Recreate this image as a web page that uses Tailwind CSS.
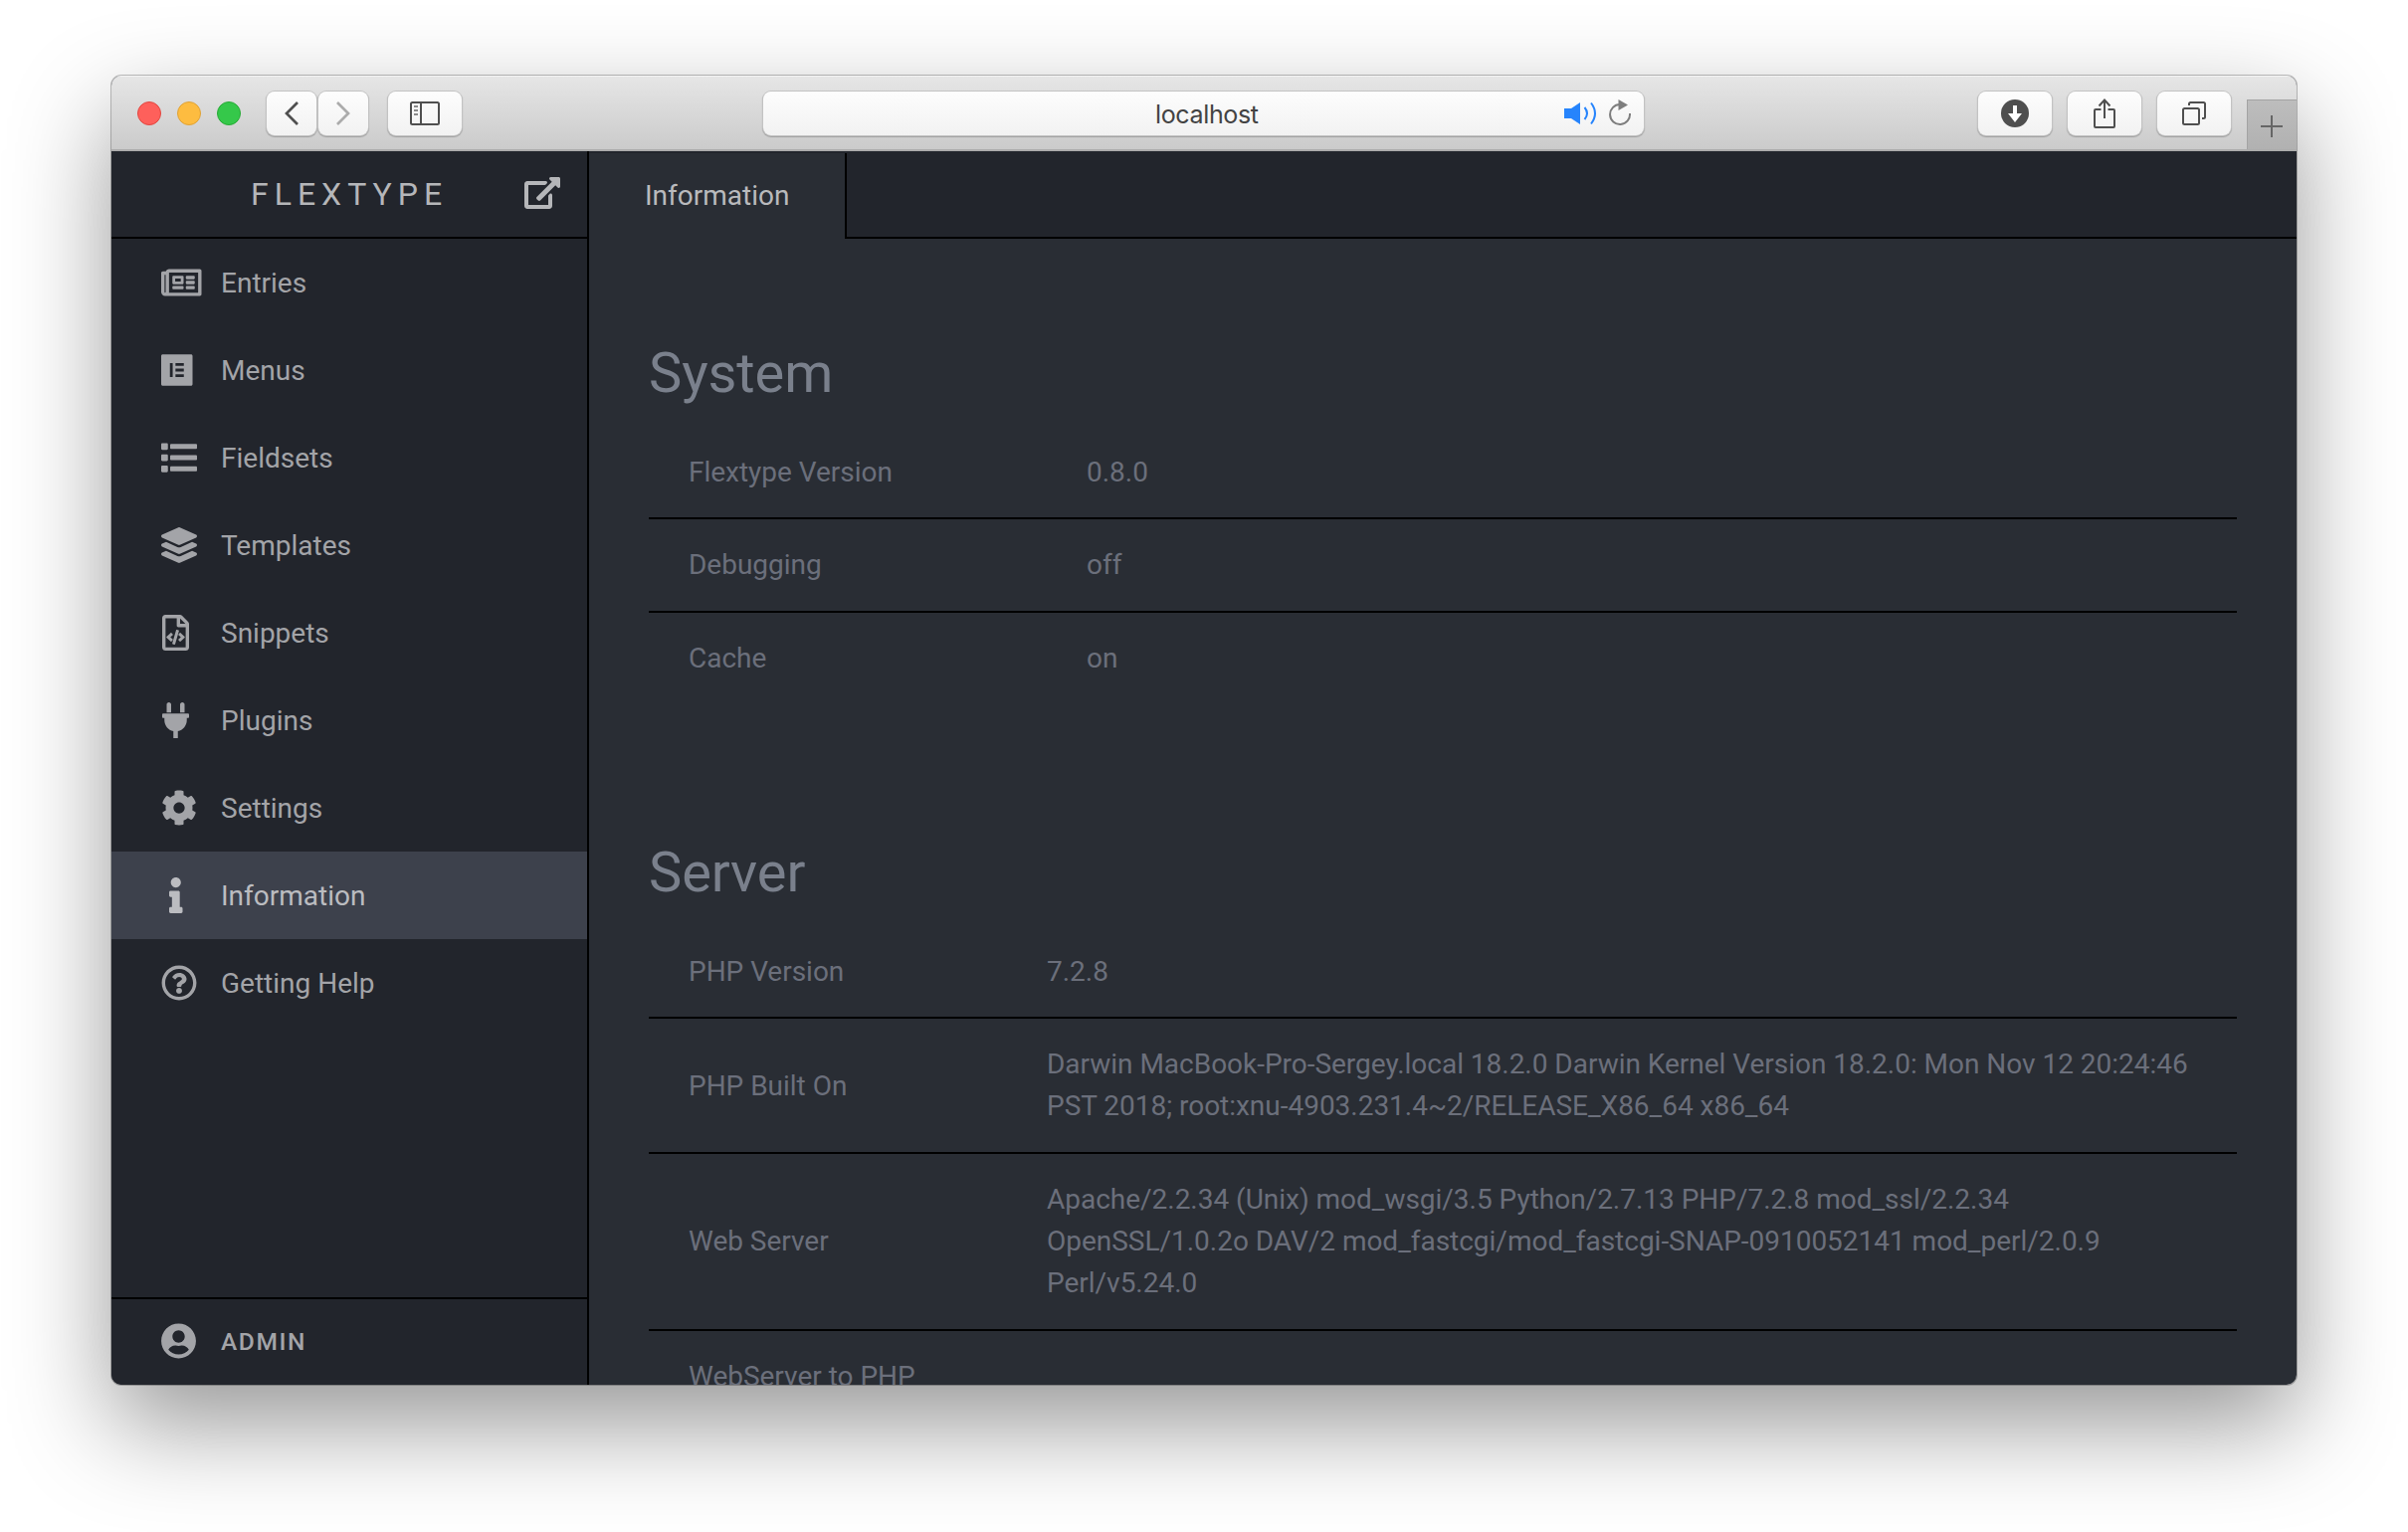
<!DOCTYPE html>
<html lang="en">
<head>
<meta charset="utf-8">
<title>Flextype</title>
<script src="https://cdn.jsdelivr.net/npm/@tailwindcss/browser@4"></script>
</head>
<body class="bg-white font-['Roboto',sans-serif] w-[2420px] h-[1540px] overflow-hidden px-28 pt-[76px]">
<div class="w-[2196px] h-[1316px] rounded-[10px] shadow-[0_0_0_1px_rgba(0,0,0,0.25),0_40px_100px_0px_rgba(0,0,0,0.41)]">
<div class="w-full h-full rounded-[10px] overflow-hidden flex flex-col bg-[#292d34]">
  <!-- Browser toolbar -->
  <header class="h-[76px] shrink-0 flex items-center pt-0.5 bg-linear-to-b from-[#e6e6e6] to-[#cbcbcb] border-b-2 border-[#acacac] shadow-[inset_0_1px_0_#f4f4f4]">
    <div class="flex gap-4 ml-[26px]">
      <span class="size-6 rounded-full bg-[#fe605b] border border-[#e2463f]"></span>
      <span class="size-6 rounded-full bg-[#fdbc40] border border-[#dfa236]"></span>
      <span class="size-6 rounded-full bg-[#35c84a] border border-[#27aa35]"></span>
    </div>
    <div class="flex gap-0.5 ml-[26px]">
      <span class="w-[50px] h-11 rounded-lg bg-linear-to-b from-[#fdfdfd] to-[#f2f2f2] shadow-[0_0_0_1px_#c3c3c3,0_1px_1px_1px_#9f9f9f] flex items-center justify-center">
        <svg class="w-7 h-7" viewBox="0 0 28 28" fill="none" stroke="#4f4f4f" stroke-width="2.7"><path d="M20 3 9 14l11 11"/></svg>
      </span>
      <span class="w-[50px] h-11 rounded-lg bg-linear-to-b from-[#fdfdfd] to-[#f2f2f2] shadow-[0_0_0_1px_#c3c3c3,0_1px_1px_1px_#9f9f9f] flex items-center justify-center">
        <svg class="w-7 h-7" viewBox="0 0 28 28" fill="none" stroke="#ababab" stroke-width="2.7"><path d="M8 3l11 11L8 25"/></svg>
      </span>
    </div>
    <span class="ml-5 w-[74px] h-11 rounded-lg bg-linear-to-b from-[#fdfdfd] to-[#f2f2f2] shadow-[0_0_0_1px_#c3c3c3,0_1px_1px_1px_#9f9f9f] flex items-center justify-center">
      <svg class="w-[30px] h-6" viewBox="0 0 30 24" fill="none" stroke="#4f4f4f" stroke-width="2"><rect x="1" y="1" width="28" height="22" rx="1.5"/><path d="M11 1v22"/><path stroke="#8a8a8a" d="M4 5h4M4 9h4M4 13h4"/></svg>
    </span>
    <div class="ml-[303px] w-[885px] h-11 rounded-lg bg-linear-to-b from-[#fdfdfd] to-[#f2f2f2] shadow-[0_0_0_1px_#c3c3c3,0_1px_1px_1px_#9f9f9f] flex items-center pl-[394px]">
      <span class="text-[25px] leading-none text-[#434343] font-['Inter',sans-serif] tracking-[-0.35px] mt-0.5 w-[411px]">localhost</span>
      <svg class="w-[34px] h-6 shrink-0" viewBox="0 0 34 24" fill="none" stroke="#2684fc" stroke-width="2"><path fill="#2684fc" stroke="none" d="M0 7h7l9-6v22l-9-6H0z"/><path d="M20.500 6q5 6 0 12M27 1.500q8 10.500 0 21"/></svg>
      <svg class="w-6 h-7 ml-[11px] shrink-0" viewBox="0 0 24 28" fill="none" stroke="#7e7e7e" stroke-width="2"><path d="M11 5A10 10 0 1 0 21 14"/><path fill="#7e7e7e" stroke="none" d="M9.500 0 19 5.500 9.500 11z"/></svg>
    </div>
    <div class="flex gap-4 ml-[336px]">
      <span class="w-[74px] h-11 rounded-lg bg-linear-to-b from-[#fdfdfd] to-[#f2f2f2] shadow-[0_0_0_1px_#c3c3c3,0_1px_1px_1px_#9f9f9f] flex items-center justify-center">
        <svg class="size-7" viewBox="0 0 28 28"><circle cx="14" cy="14" r="14" fill="#4f4f4f"/><path fill="#fff" d="M12 6h4v8h5l-7 9-7-9h5z"/></svg>
      </span>
      <span class="w-[74px] h-11 rounded-lg bg-linear-to-b from-[#fdfdfd] to-[#f2f2f2] shadow-[0_0_0_1px_#c3c3c3,0_1px_1px_1px_#9f9f9f] flex items-center justify-center">
        <svg class="w-6 h-[30px]" viewBox="0 0 24 30" fill="none" stroke="#4f4f4f" stroke-width="2"><path d="M8.500 11H3q-1 0-1 1v16q0 1 1 1h18q1 0 1-1V12q0-1-1-1h-5.500M12 20V1.500M6.500 7.500 12 1.500l5.500 6"/></svg>
      </span>
      <span class="w-[74px] h-11 rounded-lg bg-linear-to-b from-[#fdfdfd] to-[#f2f2f2] shadow-[0_0_0_1px_#c3c3c3,0_1px_1px_1px_#9f9f9f] flex items-center justify-center">
        <svg class="w-6 h-6" viewBox="0 0 24 24" fill="none" stroke="#4f4f4f" stroke-width="2"><rect x="1" y="7" width="16" height="16" rx="1.500"/><path d="M7 4V2.500Q7 1 8.500 1h13Q23 1 23 2.500v13q0 1.500-1.500 1.500H20"/></svg>
      </span>
    </div>
    <span class="ml-auto self-end w-[50px] h-[50px] bg-linear-to-b from-[#bdbdbd] to-[#b1b1b1] border-l border-t border-[#a3a3a3] flex items-center justify-center">
      <svg class="size-[22px] mt-0.5 mr-0.5" viewBox="0 0 22 22" stroke="#666" stroke-width="2"><path d="M11 0v22M0 11h22"/></svg>
    </span>
  </header>

  <div class="flex flex-1 min-h-0">
    <!-- Sidebar -->
    <aside class="w-[480px] shrink-0 bg-[#22252c] border-r-2 border-black flex flex-col text-[#a3a4a8] text-[28px]">
      <div class="h-[88px] border-b-2 border-black flex items-center pl-[140px] text-[#b5b6b9]">
        <span class="text-[32px] tracking-[6px] w-[275px]">FLEXTYPE</span>
        <svg class="w-9 h-8 fill-current -mt-0.5" viewBox="0 0 576 512"><path d="M576 24v127.984c0 21.461-25.960 31.980-40.971 16.971l-35.707-35.709-243.523 243.523c-9.373 9.373-24.568 9.373-33.941 0l-22.627-22.627c-9.373-9.373-9.373-24.569 0-33.941L442.756 76.676l-35.703-35.705C391.982 25.900 402.656 0 424.024 0H552c13.255 0 24 10.745 24 24zM407.029 270.794l-16 16A23.999 23.999 0 0 0 384 303.765V448H64V128h264a24.003 24.003 0 0 0 16.970-7.029l16-16C376.089 89.851 365.381 64 344 64H48C21.490 64 0 85.490 0 112v352c0 26.510 21.490 48 48 48h352c26.510 0 48-21.490 48-48V287.764c0-21.382-25.852-32.090-40.971-16.970z"/></svg>
      </div>
      <nav class="flex flex-col flex-1">
        <a class="h-[88px] flex items-center pl-[50px]"><span class="w-[60px]"><svg class="h-9 w-[40.500px] fill-current" viewBox="0 0 576 512"><path d="M552 64H112c-20.858 0-38.643 13.377-45.248 32H24c-13.255 0-24 10.745-24 24v272c0 30.928 25.072 56 56 56h496c13.255 0 24-10.745 24-24V88c0-13.255-10.745-24-24-24zM48 392V144h16v248c0 4.411-3.589 8-8 8s-8-3.589-8-8zm480 8H111.422c.374-2.614.578-5.283.578-8V112h416v288zM172 280h136c6.627 0 12-5.373 12-12v-96c0-6.627-5.373-12-12-12H172c-6.627 0-12 5.373-12 12v96c0 6.627 5.373 12 12 12zm28-80h80v40h-80v-40zm-40 140v-24c0-6.627 5.373-12 12-12h136c6.627 0 12 5.373 12 12v24c0 6.627-5.373 12-12 12H172c-6.627 0-12-5.373-12-12zm192 0v-24c0-6.627 5.373-12 12-12h104c6.627 0 12 5.373 12 12v24c0 6.627-5.373 12-12 12H364c-6.627 0-12-5.373-12-12zm0-144v-24c0-6.627 5.373-12 12-12h104c6.627 0 12 5.373 12 12v24c0 6.627-5.373 12-12 12H364c-6.627 0-12-5.373-12-12zm0 72v-24c0-6.627 5.373-12 12-12h104c6.627 0 12 5.373 12 12v24c0 6.627-5.373 12-12 12H364c-6.627 0-12-5.373-12-12z"/></svg></span><span class="pt-0.5">Entries</span></a>
        <a class="h-[88px] flex items-center pl-[50px]"><span class="w-[60px]"><svg class="h-9 w-[31.500px] fill-current" viewBox="0 0 448 512"><path d="M425.600 32H22.400C10 32 0 42 0 54.400v403.200C0 470 10 480 22.400 480h403.200c12.400 0 22.400-10 22.400-22.400V54.400C448 42 438 32 425.600 32M164.300 355.500h-39.800v-199h39.800v199zm159.300 0H204.100v-39.800h119.500v39.800zm0-79.600H204.100v-39.800h119.500v39.800zm0-79.700H204.100v-39.800h119.500v39.800z"/></svg></span><span class="pt-0.5">Menus</span></a>
        <a class="h-[88px] flex items-center pl-[50px]"><span class="w-[60px]"><svg class="size-9 fill-current" viewBox="0 0 512 512"><path d="M128 116V76c0-8.837 7.163-16 16-16h352c8.837 0 16 7.163 16 16v40c0 8.837-7.163 16-16 16H144c-8.837 0-16-7.163-16-16zm16 176h352c8.837 0 16-7.163 16-16v-40c0-8.837-7.163-16-16-16H144c-8.837 0-16 7.163-16 16v40c0 8.837 7.163 16 16 16zm0 160h352c8.837 0 16-7.163 16-16v-40c0-8.837-7.163-16-16-16H144c-8.837 0-16 7.163-16 16v40c0 8.837 7.163 16 16 16zM16 144h64c8.837 0 16-7.163 16-16V64c0-8.837-7.163-16-16-16H16C7.163 48 0 55.163 0 64v64c0 8.837 7.163 16 16 16zm0 160h64c8.837 0 16-7.163 16-16v-64c0-8.837-7.163-16-16-16H16c-8.837 0-16 7.163-16 16v64c0 8.837 7.163 16 16 16zm0 160h64c8.837 0 16-7.163 16-16v-64c0-8.837-7.163-16-16-16H16c-8.837 0-16 7.163-16 16v64c0 8.837 7.163 16 16 16z"/></svg></span><span class="pt-0.5">Fieldsets</span></a>
        <a class="h-[88px] flex items-center pl-[50px]"><span class="w-[60px]"><svg class="size-9 fill-current" viewBox="0 0 512 512"><path d="M12.410 148.020l232.940 105.670c6.800 3.090 14.490 3.090 21.290 0l232.940-105.670c16.550-7.510 16.550-32.520 0-40.030L266.650 2.310a25.607 25.607 0 0 0-21.290 0L12.410 107.980c-16.550 7.510-16.550 32.530 0 40.040zm487.180 88.280l-58.090-26.330-161.640 73.270c-7.560 3.430-15.590 5.170-23.860 5.170s-16.290-1.740-23.860-5.170L70.510 209.970l-58.100 26.330c-16.550 7.500-16.550 32.500 0 40l232.940 105.590c6.800 3.080 14.490 3.080 21.290 0L499.590 276.300c16.550-7.500 16.550-32.500 0-40zm0 127.800l-57.870-26.230-161.860 73.370c-7.560 3.430-15.590 5.170-23.860 5.170s-16.290-1.740-23.860-5.170L70.290 337.870 12.410 364.100c-16.550 7.500-16.550 32.500 0 40l232.940 105.590c6.800 3.080 14.490 3.080 21.290 0L499.590 404.100c16.550-7.500 16.550-32.500 0-40z"/></svg></span><span class="pt-0.5">Templates</span></a>
        <a class="h-[88px] flex items-center pl-[50px]"><span class="w-[60px] pl-px"><svg class="h-9 w-[27px] fill-current" viewBox="0 0 384 512"><path d="M149.900 349.100l-.2-.2-32.800-28.900 32.800-28.900c3.600-3.200 4-8.800.8-12.400l-.2-.2-17.400-18.600c-3.400-3.600-9-3.700-12.400-.4l-57.700 54.100c-3.700 3.500-3.700 9.400 0 12.800l57.700 54.100c1.600 1.500 3.800 2.400 6 2.400 2.400 0 4.800-1 6.400-2.800l17.400-18.600c3.300-3.500 3.100-9.100-.4-12.400zm220-251.200L286 14C277 5 264.800-.1 252.100-.1H48C21.500 0 0 21.500 0 48v416c0 26.500 21.500 48 48 48h288c26.500 0 48-21.500 48-48V131.900c0-12.700-5.100-25-14.100-34zM256 51.900l76.100 76.100H256zM336 464H48V48h160v104c0 13.300 10.700 24 24 24h104zM209.600 214c-4.700-1.400-9.500 1.300-10.900 6L144 408.100c-1.400 4.700 1.300 9.600 6 10.900l24.400 7.100c4.700 1.400 9.600-1.400 10.900-6L240 231.900c1.400-4.700-1.300-9.600-6-10.900zm24.500 76.900l.2.2 32.800 28.900-32.800 28.900c-3.600 3.200-4 8.800-.8 12.400l.2.2 17.400 18.600c3.300 3.500 8.900 3.700 12.400.4l57.700-54.100c3.700-3.500 3.700-9.400 0-12.800l-57.700-54.100c-3.500-3.300-9.100-3.200-12.400.4l-17.400 18.600c-3.300 3.500-3.100 9.100.4 12.400z"/></svg></span><span class="pt-0.5">Snippets</span></a>
        <a class="h-[88px] flex items-center pl-[50px]"><span class="w-[60px] pl-px"><svg class="h-9 w-[27px] fill-current" viewBox="0 0 384 512"><path d="M256 144V32c0-17.673 14.327-32 32-32s32 14.327 32 32v112h-64zm112 16H16c-8.837 0-16 7.163-16 16v32c0 8.837 7.163 16 16 16h16v32c0 77.406 54.969 141.971 128 156.796V512h64v-99.204c73.031-14.825 128-79.390 128-156.796v-32h16c8.837 0 16-7.163 16-16v-32c0-8.837-7.163-16-16-16zm-240-16V32c0-17.673-14.327-32-32-32S64 14.327 64 32v112h64z"/></svg></span><span class="pt-0.5">Plugins</span></a>
        <a class="h-[88px] flex items-center pl-[50px]"><span class="w-[60px]"><svg class="size-9 fill-current" viewBox="0 0 512 512"><path d="M487.400 315.700l-42.600-24.600c4.300-23.200 4.300-47 0-70.200l42.600-24.600c4.900-2.800 7.100-8.600 5.500-14-11.100-35.600-30-67.800-54.700-94.600-3.800-4.100-10-5.100-14.800-2.300L380.800 110c-17.900-15.400-38.500-27.300-60.800-35.100V25.800c0-5.600-3.900-10.500-9.400-11.700-36.700-8.200-74.300-7.800-109.200 0-5.500 1.200-9.400 6.100-9.400 11.700V75c-22.200 7.900-42.800 19.800-60.800 35.100L88.700 85.500c-4.900-2.800-11-1.900-14.800 2.300-24.700 26.700-43.600 58.900-54.700 94.600-1.700 5.400.6 11.200 5.500 14L67.300 221c-4.300 23.200-4.300 47 0 70.200l-42.600 24.600c-4.900 2.800-7.100 8.600-5.500 14 11.100 35.600 30 67.800 54.700 94.600 3.800 4.100 10 5.100 14.800 2.300l42.600-24.600c17.900 15.400 38.500 27.300 60.800 35.100v49.200c0 5.600 3.900 10.500 9.400 11.700 36.700 8.200 74.300 7.800 109.200 0 5.500-1.200 9.400-6.100 9.400-11.700v-49.200c22.200-7.900 42.800-19.800 60.800-35.100l42.600 24.600c4.900 2.800 11 1.900 14.800-2.300 24.700-26.700 43.600-58.900 54.700-94.600 1.500-5.500-.7-11.300-5.600-14.100zM256 336c-44.100 0-80-35.900-80-80s35.900-80 80-80 80 35.900 80 80-35.900 80-80 80z"/></svg></span><span class="pt-0.5">Settings</span></a>
        <a class="h-[88px] flex items-center pl-[50px] bg-[#3d414c] text-[#bbbcc0]"><span class="w-[60px] pl-2"><svg class="h-9 w-[13.500px] fill-current" viewBox="0 0 192 512"><path d="M20 424.229h20V279.771H20c-11.046 0-20-8.954-20-20V212c0-11.046 8.954-20 20-20h112c11.046 0 20 8.954 20 20v212.229h20c11.046 0 20 8.954 20 20V492c0 11.046-8.954 20-20 20H20c-11.046 0-20-8.954-20-20v-47.771c0-11.046 8.954-20 20-20zM96 0C56.235 0 24 32.235 24 72s32.235 72 72 72 72-32.235 72-72S135.764 0 96 0z"/></svg></span><span class="pt-0.5">Information</span></a>
        <a class="h-[88px] flex items-center pl-[50px]"><span class="w-[60px]"><svg class="size-9 fill-current" viewBox="0 0 512 512"><path d="M256 8C119.043 8 8 119.083 8 256c0 136.997 111.043 248 248 248s248-111.003 248-248C504 119.083 392.957 8 256 8zm0 448c-110.532 0-200-89.431-200-200 0-110.495 89.472-200 200-200 110.491 0 200 89.471 200 200 0 110.530-89.431 200-200 200zm107.244-255.200c0 67.052-72.421 68.084-72.421 92.863V300c0 6.627-5.373 12-12 12h-45.647c-6.627 0-12-5.373-12-12v-8.659c0-35.745 27.100-50.034 47.579-61.516 17.561-9.845 28.324-16.541 28.324-29.579 0-17.246-21.999-28.693-39.784-28.693-23.189 0-33.894 10.977-48.942 29.969-4.057 5.120-11.460 6.071-16.666 2.124l-27.824-21.098c-5.107-3.872-6.251-11.066-2.644-16.363C184.846 131.491 214.940 112 261.794 112c49.071 0 101.450 38.304 101.450 88.800zM298 368c0 23.159-18.841 42-42 42s-42-18.841-42-42 18.841-42 42-42 42 18.841 42 42z"/></svg></span><span class="pt-0.5">Getting Help</span></a>
      </nav>
      <div class="h-[88px] border-t-2 border-black flex items-center pl-[50px]">
        <span class="w-[60px]"><svg class="h-9 w-[35px] fill-current -mt-[3px]" viewBox="0 0 496 512"><path d="M248 8C111 8 0 119 0 256s111 248 248 248 248-111 248-248S385 8 248 8zm0 96c48.600 0 88 39.400 88 88s-39.400 88-88 88-88-39.400-88-88 39.400-88 88-88zm0 344c-58.700 0-111.300-26.600-146.500-68.200 18.800-35.400 55.600-59.800 98.500-59.800 2.400 0 4.800.4 7.100 1.100 13 4.200 26.600 6.900 40.900 6.900 14.300 0 28-2.700 40.900-6.900 2.300-.7 4.700-1.100 7.100-1.100 42.900 0 79.700 24.400 98.500 59.800C359.300 421.400 306.700 448 248 448z"/></svg></span>
        <span class="text-[24.500px] font-medium tracking-[1.6px]">ADMIN</span>
      </div>
    </aside>

    <!-- Content -->
    <main class="flex-1 min-w-0 flex flex-col">
      <div class="h-[88px] shrink-0 flex text-[28px] border-t-2 border-[#22252c]">
        <div class="w-[259px] border-r-2 border-black flex items-center pl-14 text-[#b9babd]">Information</div>
        <div class="flex-1 bg-[#22252c] border-b-2 border-black"></div>
      </div>
      <div class="flex-1 min-h-0 overflow-hidden px-[60px] text-[28px] leading-[42px] tracking-[-0.02px] text-[#6b6f7b]">
        <h1 class="mt-[101px] h-[87px] text-[56px] leading-[68px] tracking-[-0.1px] text-[#7a808c]">System</h1>
        <section class="divide-y-2 divide-black">
          <div class="flex pt-[26px] pb-6 pl-10"><span class="w-[400px]">Flextype Version</span><span>0.8.0</span></div>
          <div class="flex py-[25px] pl-10"><span class="w-[400px]">Debugging</span><span>off</span></div>
          <div class="flex py-[25px] pl-10"><span class="w-[400px]">Cache</span><span>on</span></div>
        </section>
        <h1 class="mt-[135px] h-[87px] text-[56px] leading-[68px] tracking-[-0.1px] text-[#7a808c]">Server</h1>
        <section class="divide-y-2 divide-black">
          <div class="flex items-center pt-[26px] pb-6 pl-10"><span class="w-[360px] shrink-0">PHP Version</span><span>7.2.8</span></div>
          <div class="flex items-center py-[25px] pl-10"><span class="w-[360px] shrink-0 pt-0.5">PHP Built On</span><span>Darwin MacBook-Pro-Sergey.local 18.2.0 Darwin Kernel Version 18.2.0: Mon Nov 12 20:24:46<br>PST 2018; root:xnu-4903.231.4~2/RELEASE_X86_64 x86_64</span></div>
          <div class="flex items-center py-[25px] pl-10"><span class="w-[360px] shrink-0">Web Server</span><span>Apache/2.2.34 (Unix) mod_wsgi/3.5 Python/2.7.13 PHP/7.2.8 mod_ssl/2.2.34<br>OpenSSL/1.0.2o DAV/2 mod_fastcgi/mod_fastcgi-SNAP-0910052141 mod_perl/2.0.9<br>Perl/v5.24.0</span></div>
          <div class="flex items-center py-[25px] pl-10"><span class="w-[360px] shrink-0">WebServer to PHP</span></div>
        </section>
      </div>
    </main>
  </div>
</div>
</div>
</body>
</html>
